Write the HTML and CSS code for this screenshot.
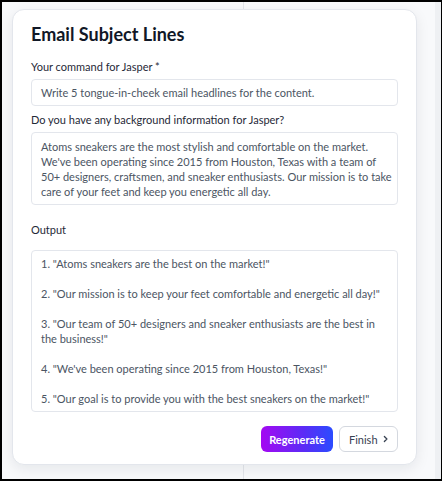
FILE: index.html
```html
<!DOCTYPE html>
<html lang="en">
<head>
<meta charset="utf-8">
<title>Email Subject Lines</title>
<link rel="stylesheet" href="styles.css">
</head>
<body>
<div class="frame">
  <section class="card">
    <h1 class="title">Email Subject Lines</h1>
    <div class="field">
      <label class="label">Your command for Jasper *</label>
      <div class="box input">Write 5 tongue-in-cheek email headlines for the content.</div>
    </div>
    <div class="field">
      <label class="label">Do you have any background information for Jasper?</label>
      <div class="box area">Atoms sneakers are the most stylish and comfortable on the market.<br>We've been operating since 2015 from Houston, Texas with a team of<br>50+ designers, craftsmen, and sneaker enthusiasts. Our mission is to take<br>care of your feet and keep you energetic all day.</div>
    </div>
    <div class="field output-field">
      <label class="label">Output</label>
      <div class="box output">
        <p>1. "Atoms sneakers are the best on the market!"</p>
        <p>2. "Our mission is to keep your feet comfortable and energetic all day!"</p>
        <p>3. "Our team of 50+ designers and sneaker enthusiasts are the best in<br>the business!"</p>
        <p>4. "We've been operating since 2015 from Houston, Texas!"</p>
        <p>5. "Our goal is to provide you with the best sneakers on the market!"</p>
      </div>
    </div>
    <div class="actions">
      <button class="btn primary">Regenerate</button>
      <button class="btn secondary">Finish <svg class="chev" width="6" height="8" viewBox="0 0 6 8"><path d="M1.5 1.2 L4.3 4 L1.5 6.8" fill="none" stroke="currentColor" stroke-width="1.4" stroke-linecap="round" stroke-linejoin="round"/></svg></button>
    </div>
  </section>
</div>
</body>
</html>
```
FILE: styles.css
```css
* { box-sizing: border-box; }
html, body { margin: 0; padding: 0; }
body {
  font-family: "Lato", "Noto Sans", sans-serif;
  color: #1f2937;
}
.frame {
  width: 442px;
  height: 481px;
  border: 2px solid #000;
  border-right-width: 1px;
  background-color: #f8f9fb;
  background-image:
    linear-gradient(to right, transparent 241px, #e3e5ea 241px, #e3e5ea 242px, transparent 242px),
    linear-gradient(to right, transparent 433px, #eef0f3 433px);
  padding: 7px 0 0 10px;
}
.card {
  width: 405px;
  height: 456px;
  background: #fff;
  border: 1px solid #e3e6ec;
  border-radius: 12px;
  box-shadow: 0 4px 14px rgba(17, 24, 39, 0.08);
  padding: 12px 18px 11px 18px;
  display: flex;
  flex-direction: column;
}
.title {
  margin: 0;
  font-size: 18px;
  line-height: 24px;
  font-weight: 700;
  color: #111827;
}
.field {
  display: flex;
  flex-direction: column;
  gap: 5px;
}
.field:first-of-type { margin-top: 13px; }
.field + .field { margin-top: 6px; }
.output-field { margin-top: 17px !important; gap: 13px; }
.label {
  font-size: 11px;
  line-height: 15px;
  color: #1f2937;
}
.box {
  border: 1px solid #e3e6ec;
  border-radius: 4px;
  background: #fff;
  font-size: 11px;
  line-height: 15px;
  color: #4b5563;
  padding: 0 9px;
  white-space: nowrap;
}
.input {
  height: 27px;
  display: flex;
  align-items: center;
}
.area {
  height: 73px;
  padding-top: 6px;
}
.output {
  height: 162px;
  padding-top: 5px;
}
.output p { margin: 0 0 15px 0; }
.output p:last-child { margin-bottom: 0; }
.actions {
  margin-top: 14px;
  display: flex;
  justify-content: flex-end;
  gap: 6px;
}
.btn {
  height: 26px;
  border-radius: 6px;
  font-family: inherit;
  font-size: 11px;
  padding: 0 9px;
  display: inline-flex;
  align-items: center;
  justify-content: center;
  gap: 5px;
  cursor: pointer;
}
.primary {
  width: 72px;
  border: none;
  color: #fff;
  font-weight: 700;
  background: linear-gradient(90deg, #a409f2 0%, #5a2cf6 60%, #2b4cff 100%);
}
.secondary {
  width: 59px;
  border: 1px solid #d4d8df;
  background: #fff;
  color: #374151;
}
.chev { display: block; }
```
